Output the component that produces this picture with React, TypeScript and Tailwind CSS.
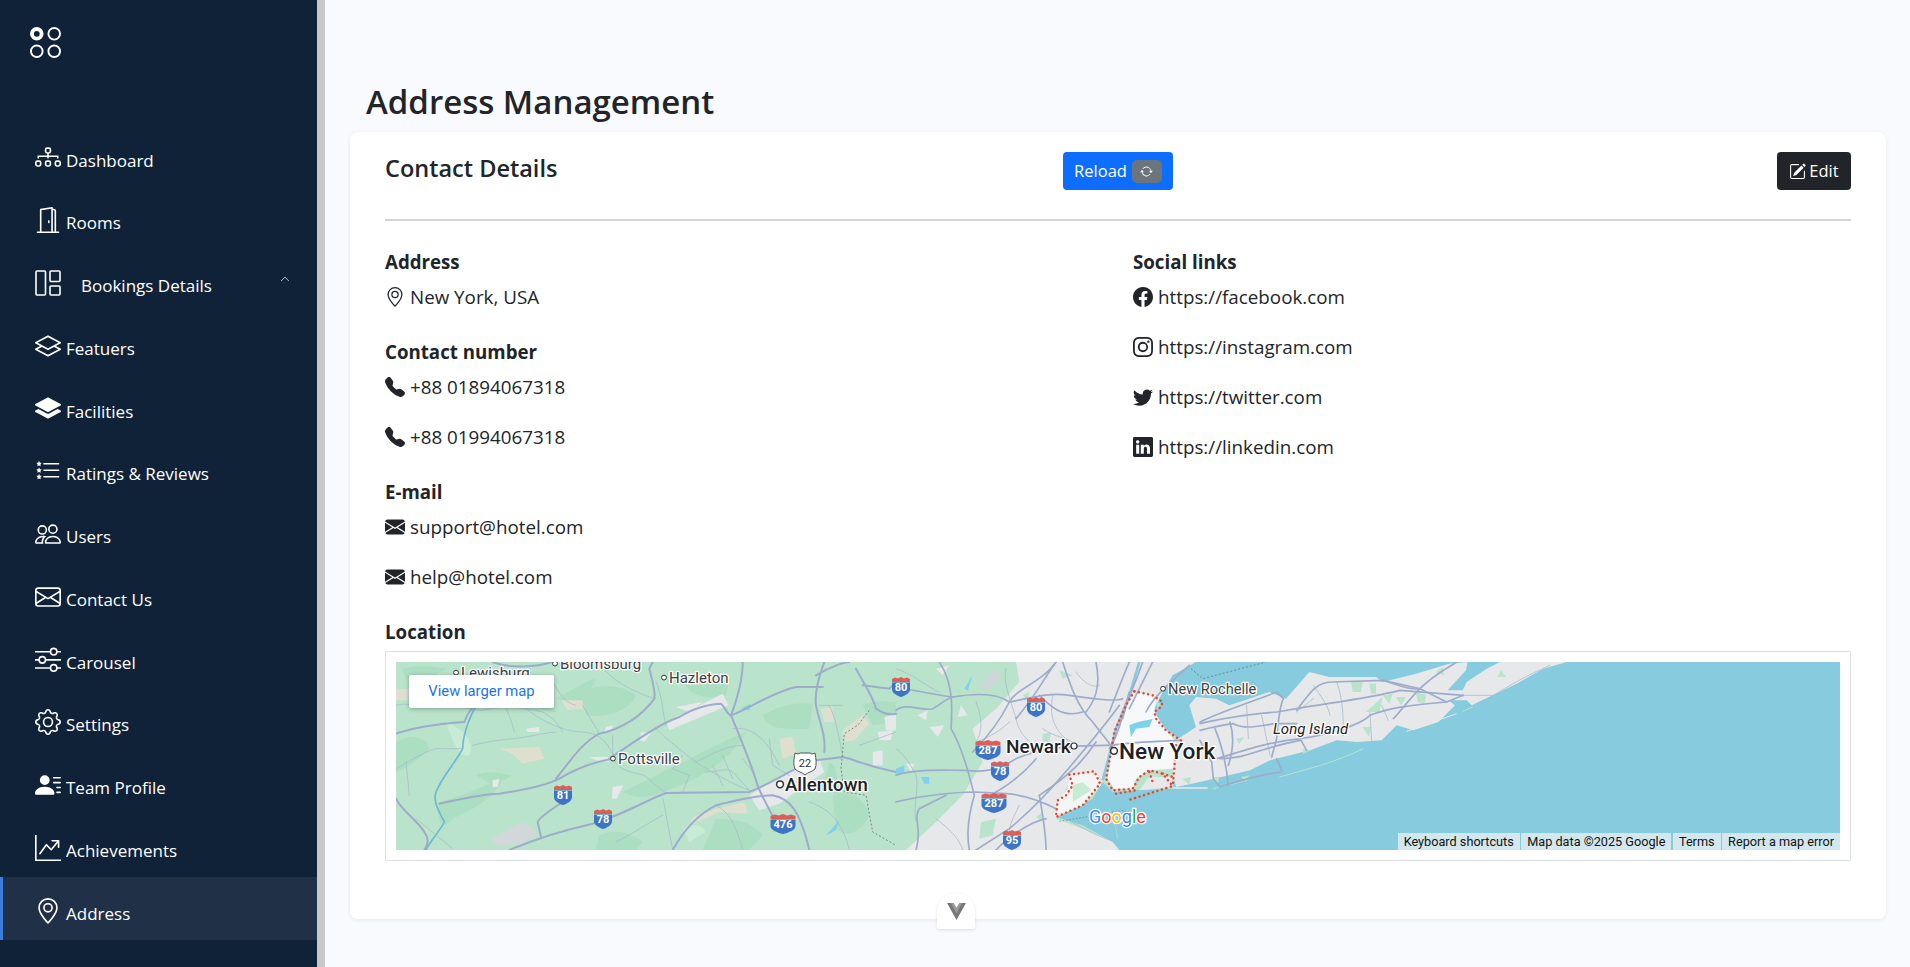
import React from "react";
import {
  BsUiRadiosGrid, BsDiagram3, BsDoorOpen, BsLayers, BsLayersFill, BsListStars, BsPeople,
  BsEnvelope, BsSliders, BsGear, BsPersonLinesFill, BsGraphUpArrow, BsGeoAlt, BsChevronUp, BsArrowRepeat,
  BsPencilSquare, BsTelephoneFill, BsEnvelopeFill, BsFacebook, BsInstagram, BsTwitter, BsLinkedin,
} from "react-icons/bs";

function LayoutIcon({ className }: { className?: string }) {
  return (
    <svg viewBox="0 0 26 26" className={className} fill="none" stroke="currentColor" strokeWidth="1.6">
      <rect x="1" y="1" width="9.5" height="24" rx="1" />
      <rect x="15" y="1" width="10" height="10.5" rx="1" />
      <rect x="15" y="16" width="10" height="9" rx="1" />
    </svg>
  );
}

const nav = [
  { label: "Dashboard", Icon: BsDiagram3 },
  { label: "Rooms", Icon: BsDoorOpen },
  { label: "Bookings Details", Icon: LayoutIcon, sub: true },
  { label: "Featuers", Icon: BsLayers },
  { label: "Facilities", Icon: BsLayersFill },
  { label: "Ratings & Reviews", Icon: BsListStars },
  { label: "Users", Icon: BsPeople },
  { label: "Contact Us", Icon: BsEnvelope },
  { label: "Carousel", Icon: BsSliders },
  { label: "Settings", Icon: BsGear },
  { label: "Team Profile", Icon: BsPersonLinesFill },
  { label: "Achievements", Icon: BsGraphUpArrow },
  { label: "Address", Icon: BsGeoAlt, active: true },
];

function Sidebar() {
  return (
    <aside className="w-[317px] shrink-0 bg-[#0f2238] text-white flex flex-col">
      <div className="h-[124px] pl-[30px] pt-[27px]">
        <BsUiRadiosGrid className="w-[31px] h-[31px]" />
      </div>
      <nav className="flex flex-col">
        {nav.map(({ label, Icon, sub, active }) => (
          <div
            key={label}
            className={
              active
                ? "h-[63px] flex items-center pl-[32px] border-l-[3px] border-[#3b7ddd] bg-[#203147]"
                : "h-[62.75px] flex items-center pl-[35px]"
            }
          >
            <Icon className="w-[26px] h-[26px] shrink-0 translate-y-[2px]" />
            <span className={sub ? "ml-[20px] text-[17px] translate-y-[5px]" : "ml-[5px] text-[17px] translate-y-[5px]"}>{label}</span>
            {sub && <BsChevronUp className="ml-auto mr-[27px] w-[10px] h-[10px] -translate-y-[2px]" />}
          </div>
        ))}
      </nav>
    </aside>
  );
}

function Shield({ x, y, t, w = 18 }: { x: number; y: number; t: string; w?: number }) {
  const h = w / 2;
  return (
    <g transform={`translate(${x},${y})`}>
      <path d={`M${-h} -8 l${w / 6} -1.5 l${w / 6} 1 l${w / 6} -1.5 l${w / 6} 1.5 l${w / 6} -1 l${w / 6} 1.5 v3 h${-w} z`} fill="#dc5f57" />
      <path d={`M${-h} -4.5 h${w} v6.5 c0 4 -${h * 0.5} 6.5 -${h} 8 c-${h * 0.5} -1.5 -${h} -4 -${h} -8 z`} fill="#3d74c4" />
      <text x="0" y="4" fontSize="11" fontWeight="700" fill="#fff" textAnchor="middle" fontFamily="Roboto, sans-serif">{t}</text>
    </g>
  );
}

function Label({ x, y, t, size = 15, weight = 400, dot, italic, fill = "#3c4043" }: { x: number; y: number; t: string; size?: number; weight?: number; dot?: boolean; italic?: boolean; fill?: string }) {
  return (
    <g>
      {dot && <circle cx={x - 5} cy={y - size * 0.36} r={size > 18 ? 3.4 : 2.4} fill="#fff" stroke="#333" strokeWidth={size > 18 ? 1.5 : 1} />}
      <text x={x} y={y} fontSize={size} fontWeight={weight} fontStyle={italic ? "italic" : "normal"} fill={fill} stroke="#fff" strokeWidth="2.5" paintOrder="stroke" strokeLinejoin="round" fontFamily="Roboto, sans-serif">{t}</text>
    </g>
  );
}

const aMajor = [
  "M0 215 C60 195 130 185 205 180 C215 150 235 130 245 125",
  "M130 425 C200 410 260 395 310 395 C380 385 450 370 490 350 C540 320 590 300 650 290",
  "M480 350 C520 300 560 240 610 215 C680 200 740 160 775 110 C780 90 765 40 760 20 L770 0",
  "M640 290 C700 250 780 190 850 165 C900 135 950 125 975 125 C990 140 995 160 1005 160",
  "M1005 160 C1060 140 1130 90 1200 75 L1280 75",
  "M1040 0 C1040 60 1020 120 1005 160 C1030 220 1060 290 1085 370 C1100 410 1130 460 1145 490",
  "M340 564 C420 530 500 505 590 485 C680 460 760 410 810 393 L1060 390 C1110 370 1160 340 1200 320 L1260 295 L1340 285 C1370 290 1400 310 1500 330",
  "M500 420 C470 440 430 465 425 480 L435 525",
  "M830 564 C860 510 900 460 960 430 C1020 415 1090 400 1130 400 C1180 410 1210 440 1240 564",
  "M1285 0 C1270 40 1255 90 1260 130 C1270 180 1290 220 1285 270",
  "M1380 20 C1400 60 1430 100 1440 140 C1460 155 1480 160 1500 155",
  "M1400 70 L1480 80 L1500 60",
  "M1260 40 C1310 10 1350 0 1360 0",
  "M290 0 C340 20 420 15 470 0",
  "M0 410 C20 450 60 470 85 510 C100 530 95 550 85 564",
];

const aThin = [
  "M0 130 C30 120 60 135 120 130 C180 125 220 145 260 145",
  "M380 130 C420 170 500 210 560 210 C620 215 640 250 655 290",
  "M260 145 C320 130 380 135 440 150 C470 165 490 190 500 210",
  "M0 320 C40 300 80 270 120 260 L200 260",
  "M30 300 L40 400 M60 470 L170 560",
  "M230 250 C270 240 300 235 350 230 C400 225 430 215 480 210",
  "M330 140 C345 170 350 190 355 210",
  "M650 220 C650 260 650 280 655 290 C660 320 700 330 745 340 C770 360 790 380 810 393",
  "M700 250 L780 200 C810 230 860 270 900 300 C960 340 1020 370 1060 385",
  "M800 410 C810 440 810 470 820 510 L830 564",
  "M1010 200 C1080 190 1120 250 1150 310",
  "M900 300 C940 280 990 250 1040 250",
  "M930 330 C970 330 1000 310 1020 340 L1060 385",
  "M980 280 L1010 350 M950 310 L980 370 M1040 290 L1070 330",
  "M1120 230 L1130 310 L1180 340",
  "M1300 130 C1320 170 1330 230 1340 285",
  "M1390 250 L1500 210 M1270 130 L1340 130",
  "M610 0 C640 50 690 80 775 110",
  "M780 60 C800 100 800 160 810 190",
  "M660 540 C720 510 760 480 800 460",
  "M960 430 C1000 450 1020 490 1040 564",
  "M1240 420 C1300 440 1340 480 1360 564",
  "M470 60 C490 90 500 120 540 130 M560 130 L610 215",
  "M860 280 L830 320 L880 340 L860 390",
];

const bMajor = [
  "M0 75 C60 85 120 100 170 105 C230 95 300 90 340 120 C400 110 450 90 520 100 C590 110 660 120 680 110",
  "M130 0 C170 60 170 130 165 200 C200 260 220 340 235 400 C220 450 210 510 220 564",
  "M0 340 C50 320 150 325 210 325 C250 330 300 330 360 290 C430 260 500 250 640 250",
  "M0 420 C80 400 180 390 235 390 L330 395 C400 400 460 430 480 440",
  "M0 145 C30 120 80 150 110 140 C130 130 150 110 170 105",
  "M360 170 C420 100 450 40 480 0",
  "M500 0 C520 60 540 130 590 180 C620 220 640 240 650 260",
  "M600 0 C610 50 610 100 570 150",
  "M670 130 C620 200 560 270 500 340 C450 400 400 450 340 500 L240 564",
  "M430 400 C440 460 450 510 450 564",
  "M700 90 C680 180 650 250 640 260",
  "M740 0 C720 60 690 120 680 170",
  "M770 0 C740 60 720 100 700 140",
  "M880 10 C840 50 780 90 750 150",
  "M850 235 C760 240 700 240 650 250",
  "M60 564 C80 500 50 470 70 440 L150 400",
  "M480 0 C440 60 360 80 340 120 C310 180 280 220 230 270",
  "M420 290 C380 340 320 380 290 395",
  "M600 240 C560 300 520 340 430 400",
  "M560 150 C500 170 460 130 430 100",
  "M300 564 C330 530 400 480 450 470",
  "M700 0 C670 70 660 100 640 150",
];

const bThin = [
  "M0 20 C60 40 100 80 130 90",
  "M0 260 C30 280 50 320 60 340 C70 380 50 430 60 480",
  "M240 240 C270 230 310 210 340 180",
  "M360 170 C370 220 400 240 430 260",
  "M470 100 C460 160 470 200 520 240",
  "M240 120 C260 170 260 210 240 240",
  "M330 20 C320 60 340 100 360 170",
  "M120 470 C160 500 190 530 200 564",
  "M540 30 C560 60 590 80 610 70",
  "M510 470 C560 500 620 530 660 540",
  "M370 430 C350 470 340 490 340 510",
  "M440 200 C480 230 510 220 540 250",
];

const cMajor = [
  "M0 180 C60 150 140 125 230 90 L250 110 C240 130 235 170 230 230 L215 285",
  "M0 185 C60 170 120 160 230 150 L290 140 C370 125 500 110 600 85 L790 100",
  "M100 185 C140 205 180 190 225 185 L290 185",
  "M50 290 C120 270 200 240 300 230 C380 220 480 190 510 160 C560 140 620 130 740 120 L790 100",
  "M290 145 C330 90 350 60 395 60 L550 55 L660 80 L740 120",
  "M660 80 C620 120 600 150 580 170",
  "M550 55 C590 70 640 85 660 80 C700 40 740 20 770 0",
  "M45 200 C70 260 80 320 85 370",
  "M90 180 C105 230 95 280 85 310",
  "M0 235 L35 300 L40 350 L60 375",
  "M245 330 C200 335 120 355 60 375",
  "M230 290 L245 325",
  "M0 205 C40 195 60 190 100 185",
  "M60 290 C140 290 170 260 300 235",
  "M300 230 L320 265",
];

const cThin = [
  "M410 60 C430 110 430 170 430 220",
  "M510 150 L515 240",
  "M790 100 L880 100 C930 70 980 40 1050 10",
  "M140 130 L145 230 M185 160 L210 280",
  "M340 70 C360 100 385 130 390 160",
  "M340 110 L290 150",
  "M545 130 L565 175",
];

function MapArt() {
  return (
    <svg viewBox="0 0 1444 188" preserveAspectRatio="none" className="block w-full h-full">
      <rect width="1444" height="188" fill="#b9e3cb" />
      {/* crop A: western farmland */}
      <g transform="scale(0.33333)">
        <g fill="#acdec2">
          <path d="M0 240 C50 210 90 230 100 260 C60 300 30 320 0 330z" />
          <path d="M130 420 C200 400 270 370 320 350 C300 400 240 440 170 470 C150 500 120 500 130 420z" />
          <path d="M380 80 C430 100 460 120 480 150 L400 140z" />
          <path d="M560 90 C620 60 680 70 720 100 C700 150 620 170 570 160z" />
          <path d="M680 390 C760 350 820 320 880 290 C940 260 1000 230 1050 210 C1010 290 900 360 800 390 C760 410 720 410 680 390z" />
          <path d="M870 70 C930 60 970 70 1000 50 L990 100 C940 110 890 110 870 70z" />
          <path d="M1100 160 C1150 130 1200 120 1250 125 L1240 200 C1180 200 1120 210 1100 160z" />
          <path d="M1310 400 C1360 380 1410 410 1420 460 C1400 510 1350 530 1320 500z" />
          <path d="M960 470 C1020 470 1070 480 1100 520 L1060 564 H920z" />
          <path d="M610 520 C660 500 700 510 740 540 L720 564 H600z" />
          <path d="M480 110 C520 90 560 60 600 50 L560 130z" />
          <path d="M240 340 C280 320 330 340 350 340 L290 370z" />
          <path d="M20 20 C60 10 100 10 150 20 L100 50 L30 50z" />
          <path d="M1400 130 C1450 110 1480 120 1500 120 V180 L1430 190z" />
          <path d="M1300 300 C1330 320 1320 360 1330 400 L1280 380z" />
        </g>
        <g fill="#c8ebd6">
          <path d="M150 180 C200 200 240 240 220 280 C190 290 170 240 150 180z" />
          <path d="M860 500 C890 480 920 490 930 510 L880 540z" />
        </g>
        <g fill="#dfdfd0">
          <path d="M310 260 L430 255 L445 290 L380 305 L350 275z" />
          <path d="M495 115 L560 115 L560 140 L515 145z" />
          <path d="M890 465 L960 440 L1045 420 L1055 455 L970 450 L880 490z" />
          <path d="M0 80 L40 80 L35 115 L0 115z" />
          <path d="M1150 230 L1190 225 L1200 275 L1160 290z" />
          <path d="M1275 140 L1310 135 L1315 180 L1285 180z" />
          <path d="M1340 205 L1400 160 L1420 185 L1375 235 L1345 240z" />
        </g>
        <g fill="#e6e8ea">
          <path d="M810 180 L980 95 L998 130 L820 205z" />
          <path d="M735 210 L765 213 L745 240 L732 235z" />
          <path d="M840 135 L920 120 L880 150z" />
          <path d="M650 375 L682 370 L662 410 L648 410z" />
          <path d="M1060 400 L1190 320 L1270 290 L1285 330 L1150 425 L1090 445z" />
          <path d="M1445 210 L1490 205 L1485 235 L1450 235z" />
          <path d="M1465 165 L1500 155 L1500 205 L1470 205z" />
          <path d="M580 285 L645 285 L640 300 L600 295z" />
          <path d="M390 200 L430 195 L430 210 L395 210z" />
          <path d="M630 195 L650 190 L645 210 L625 210z" />
          <path d="M290 355 L310 350 L305 375 L290 375z" />
          <path d="M1430 270 L1460 265 L1460 310 L1430 310z" />
        </g>
        <path d="M285 530 L380 480 L425 510 L380 545 L300 550z" fill="#d2d8d9" />
        <path d="M1035 140 L1065 125 L1060 145z" fill="#7fd2ec" />
        <path d="M1290 520 L1330 475 L1320 505z" fill="#7fd2ec" />
        <path d="M245 125 C215 170 200 230 200 260 C180 300 140 340 120 390 C110 420 130 450 145 480 C130 510 100 540 90 564" fill="none" stroke="#6db9d2" strokeWidth="5" />
        <g fill="none" stroke="#a9bccb" strokeWidth="2.4" strokeLinecap="round">
          {aThin.map((d) => <path key={d} d={d} />)}
        </g>
        <g fill="none" stroke="#9eaccb" strokeWidth="6" strokeLinecap="round">
          {aMajor.map((d) => <path key={d} d={d} />)}
        </g>
        <path d="M1420 145 L1385 190 L1345 215 L1335 320 L1345 390 L1410 400 L1430 510 L1500 550" fill="none" stroke="#6f7a78" strokeWidth="2.5" strokeDasharray="6 6" />
      </g>

      {/* crop B: New York area */}
      <g transform="translate(500,0) scale(0.33333)">
        <path d="M360 0 L370 60 L300 140 L230 200 L260 300 L200 400 L120 480 L30 564 H670 L660 540 L560 500 L480 470 L500 400 L530 340 L620 360 L650 270 L690 120 L720 0z" fill="#e6e8ea" />
        <path d="M720 0 H900 L790 130 L700 200 L680 0z" fill="#e6e8ea" />
        <g fill="#b9e3cb">
          <path d="M490 25 L530 40 L500 50z" /><path d="M440 215 L465 210 L460 240 L440 240z" />
          <path d="M255 480 L300 470 L290 520 L250 530z" /><path d="M420 465 L440 450 L435 475z" />
          <path d="M380 100 L400 90 L395 115z" />
        </g>
        <g fill="#e6e8ea">
          <path d="M100 195 L145 190 L125 225z" /><path d="M195 130 L215 160 L185 165z" /><path d="M65 160 L95 145 L90 175z" />
          <path d="M120 20 L160 10 L140 40z" /><path d="M30 305 L55 305 L45 330z" />
          <path d="M290 170 L320 160 L310 190z" />
        </g>
        <path d="M250 75 L300 18 L315 45 L275 85z" fill="#d0d6d8" />
        <path d="M205 80 L228 42 L216 86z" fill="#7fd2ec" />
        <path d="M0 320 L25 310 L25 335 L0 335z" fill="#7fd2ec" />
        <path d="M75 345 L100 345 L100 365 L85 365z" fill="#7fd2ec" />
        {/* water */}
        <path d="M900 0 L830 40 L800 90 L775 140 L790 185 L850 230 L840 330 L830 380 L720 385 L650 390 L620 360 L590 410 L480 465 L560 490 L650 540 L670 564 H2900 V0z" fill="#86cbde" />
        <path d="M730 0 L700 100 L660 200 L640 280 L620 355" fill="none" stroke="#86cbde" strokeWidth="8" />
        <path d="M640 440 L660 500 L665 530" fill="none" stroke="#b9e3cb" strokeWidth="2" />
        {/* Long Island */}
        <path d="M840 235 L900 195 L880 130 L900 105 L960 110 L1000 130 L1120 90 L1170 110 L1240 30 L1300 45 L1440 45 L1460 60 L1560 35 L1660 5 L1715 0 L1710 25 L1655 85 L1700 85 L1712 60 L1772 20 L1812 0 L2012 0 L1942 20 L1862 65 L1727 130 L1712 115 L1657 115 L1677 130 L1627 180 L1552 205 L1502 190 L1457 235 L1382 240 L1322 235 L1242 265 L1122 295 L1062 325 L912 360 L840 375 L830 330z" fill="#e6e8ea" />
        <g fill="#b9e3cb">
          <path d="M1365 60 L1400 60 L1395 90 L1370 90z" /><path d="M1420 65 L1440 65 L1440 95 L1425 95z" />
          <path d="M1410 150 L1460 105 L1450 150z" /><path d="M1460 100 L1490 95 L1480 125z" />
          <path d="M1500 105 L1530 105 L1515 130z" /><path d="M1560 90 L1590 100 L1585 125 L1565 120z" />
          <path d="M1815 25 L1830 45 L1805 45z" /><path d="M1220 260 L1245 265 L1220 275z" />
          <path d="M1400 195 L1425 195 L1420 225z" /><path d="M1020 230 L1045 225 L1030 245z" />
          <path d="M860 350 L885 345 L880 370z" /><path d="M1035 345 L1060 340 L1050 360z" />
          <path d="M950 345 L970 345 L965 370z" />
          <path d="M1620 30 L1640 15 L1645 40z" />
        </g>
        <path d="M1402 260 C1320 300 1240 320 1150 345" fill="none" stroke="#b9e3cb" strokeWidth="3" />
        <path d="M950 380 C990 370 1020 365 1050 355" fill="none" stroke="#b9e3cb" strokeWidth="3" />
        <path d="M1532 208 L1682 155" fill="none" stroke="#e6e8ea" strokeWidth="3" />
        <path d="M1700 148 L1730 135" fill="none" stroke="#b9e3cb" strokeWidth="3" />
        <path d="M830 378 L935 378" fill="none" stroke="#e6e8ea" strokeWidth="4" />
        {/* NYC */}
        <path d="M690 130 L650 250 L635 350 L655 380 L710 380 L720 350 L760 325 L830 320 L840 240 L800 190 L775 150 L780 100 L715 90z" fill="#f7f8fa" />
        <path d="M700 190 C730 175 760 175 770 170 L760 195 L720 200 L705 225z" fill="#7fd2ec" />
        <path d="M520 340 L600 330 L615 370 L560 430 L480 465 L490 410 L515 380z" fill="#f3f6f3" />
        <path d="M530 370 L560 360 L585 385 L530 420z" fill="#c8ebd6" />
        <path d="M780 120 L795 125 L785 140z" fill="#b9e3cb" />
        <path d="M760 345 L830 345 L825 375 L730 385z" fill="#e6e8ea" />
        <g fill="none" stroke="#a9bccb" strokeWidth="2.4" strokeLinecap="round">
          {bThin.map((d) => <path key={d} d={d} />)}
        </g>
        <g fill="none" stroke="#9eaccb" strokeWidth="5" strokeLinecap="round">
          {bMajor.map((d) => <path key={d} d={d} />)}
        </g>
        <path d="M885 20 L920 50 L1110 0" fill="none" stroke="#6f7a78" strokeWidth="2.5" strokeDasharray="6 6" />
        <path d="M490 478 L600 460 L680 445 L700 455" fill="none" stroke="#6f7a78" strokeWidth="2" strokeDasharray="5 5" />
        <g fill="none" stroke="#ea4335" strokeWidth="7.5" strokeDasharray="0.1 14" strokeLinecap="round">
          <path d="M715 88 L770 100 L800 120 L795 135 L775 150 L780 170 L810 205 L855 235" />
          <path d="M715 88 L690 130 L655 210 L645 270 L630 350 L650 385 L710 380 L730 345 L760 325 L800 335 L830 372 L695 415" />
          <path d="M840 250 L835 320 L830 375" />
          <path d="M660 395 L720 385" />
          <path d="M760 330 L770 360 M800 335 L830 345" />
          <path d="M520 338 L595 328 L612 365 L560 430 L480 465 L485 415 L510 400 L530 370z" />
        </g>
      </g>

      {/* crop C: Long Island roads */}
      <g transform="translate(804,0) scale(0.33333)">
        <g fill="none" stroke="#a9bccb" strokeWidth="2.4" strokeLinecap="round">
          {cThin.map((d) => <path key={d} d={d} />)}
        </g>
        <g fill="none" stroke="#9eaccb" strokeWidth="5" strokeLinecap="round">
          {cMajor.map((d) => <path key={d} d={d} />)}
        </g>
      </g>

      {/* shields */}
      <Shield x={505} y={25} t="80" />
      <Shield x={167} y={133} t="81" />
      <Shield x={207} y={157} t="78" />
      <Shield x={387} y={162} t="476" w={25} />
      <Shield x={592} y={88} t="287" w={25} />
      <Shield x={604} y={109} t="78" />
      <Shield x={598} y={141} t="287" w={25} />
      <Shield x={616} y={178} t="95" />
      <Shield x={640} y={45} t="80" />
      <g transform="translate(409,101)">
        <path d="M-10 -10l3 1 2-1 5 0 5 0 2 1 3-1c1 6 2 11 0 16c-3 3-7 3-10 6c-3-3-7-3-10-6c-2-5-1-10 0-16z" fill="#fff" stroke="#555" strokeWidth="1" />
        <text x="0" y="4" fontSize="11" fill="#333" textAnchor="middle" fontFamily="Roboto, sans-serif">22</text>
      </g>
      {/* labels */}
      <Label x={65} y={16} t="Lewisburg" dot />
      <Label x={164} y={7} t="Bloomsburg" dot />
      <Label x={273} y={21} t="Hazleton" dot />
      <Label x={222} y={102} t="Pottsville" dot />
      <Label x={389} y={129} t="Allentown" size={18.6} weight={500} dot fill="#202124" />
      <Label x={610} y={91} t="Newark" size={19} weight={500} fill="#202124" />
      <circle cx={678} cy={84} r="3" fill="#fff" stroke="#333" strokeWidth="1.2" />
      <Label x={723} y={97} t="New York" size={22.6} weight={500} dot fill="#202124" />
      <Label x={772} y={32} t="New Rochelle" size={14.6} dot />
      <Label x={877} y={72} t="Long Island" size={15} italic fill="#202124" />
      <text x="693" y="161" fontSize="18" fontFamily="Roboto, sans-serif" stroke="#fff" strokeWidth="2.5" paintOrder="stroke">
        <tspan fill="#4285f4">G</tspan><tspan fill="#ea4335">o</tspan><tspan fill="#fbbc05">o</tspan><tspan fill="#4285f4">g</tspan><tspan fill="#34a853">l</tspan><tspan fill="#ea4335">e</tspan>
      </text>
    </svg>
  );
}

function MapBlock() {
  return (
    <div className="border border-[#dee2e6] p-[10px] h-[210px]">
      <div className="relative h-[188px] overflow-hidden">
        <MapArt />
        <div className="absolute left-[13px] top-[13px] w-[145px] h-[33px] bg-white rounded-[2px] shadow-[0_1px_4px_rgba(0,0,0,0.3)] flex items-center justify-center text-[14.8px] text-[#1a73e8] font-['Roboto',sans-serif]">
          View larger map
        </div>
        <div className="absolute right-0 bottom-0 h-[17px] flex gap-[1.5px] text-[12.7px] leading-[17px] text-[#111] font-['Roboto',sans-serif]">
          <span className="px-[6px] bg-[#d3e8ee]">Keyboard shortcuts</span>
          <span className="px-[6px] bg-[#d3e8ee]">Map data ©2025 Google</span>
          <span className="px-[6px] bg-[#d3e8ee]">Terms</span>
          <span className="px-[6px] bg-[#d3e8ee]">Report a map error</span>
        </div>
      </div>
    </div>
  );
}

function Item({ Icon, text, gap = 5, size = 20 }: { Icon: React.ComponentType<{ className?: string; style?: React.CSSProperties }>; text: string; gap?: number; size?: number }) {
  return (
    <div className="h-[24px] mb-[26px] flex items-center text-[18.8px] text-[#212529]">
      <Icon style={{ width: size, height: size, marginRight: gap }} className="shrink-0" />
      <span>{text}</span>
    </div>
  );
}

function Heading({ children, top = false }: { children: React.ReactNode; top?: boolean }) {
  return <div className={top ? "h-[24px] mb-[11px] flex items-center text-[18.7px] font-bold text-[#212529]" : "h-[24px] mt-[5px] mb-[11px] flex items-center text-[18.7px] font-bold text-[#212529]"}>{children}</div>;
}

export default function App() {
  return (
    <div className="flex h-[967px] overflow-hidden bg-[#f9fafe] font-['Open_Sans',sans-serif]">
      <Sidebar />
      <div className="w-[8px] bg-[#c8c8c8] shrink-0" />
      <main className="flex-1 relative pl-[25px] pr-[24px]">
        <h1 className="h-[132px] pl-[16px] pt-[80px] text-[33px] leading-[44px] font-semibold text-[#212529]">Address Management</h1>
        <section className="h-[787px] bg-white rounded-[8px] shadow-[0_1px_4px_rgba(0,0,0,0.08)] px-[35px] pt-[20px]">
          <div className="h-[69px] flex items-start justify-between border-b-2 border-[#d4d4d4]">
            <h2 className="w-[678px] text-[23.5px] leading-[32px] font-semibold text-[#212529]">Contact Details</h2>
            <button className="h-[38px] w-[110px] rounded-[4px] bg-[#0d6efd] text-white text-[16.5px] flex items-center justify-center gap-[5px]">
              Reload
              <span className="w-[30px] h-[23px] rounded-[5px] bg-[#6c757d] flex items-center justify-center"><BsArrowRepeat className="w-[13px] h-[13px]" /></span>
            </button>
            <div className="flex-1" />
            <button className="h-[38px] w-[74px] rounded-[4px] bg-[#212529] text-white text-[16.5px] flex items-center justify-center gap-[3px]">
              <BsPencilSquare className="w-[17px] h-[17px]" /> Edit
            </button>
          </div>
          <div className="grid grid-cols-[748px_1fr] pt-[29px] h-[430px]">
            <div className="flex flex-col">
              <Heading top>Address</Heading>
              <Item Icon={BsGeoAlt} text="New York, USA" />
              <Heading>Contact number</Heading>
              <Item Icon={BsTelephoneFill} text="+88 01894067318" />
              <Item Icon={BsTelephoneFill} text="+88 01994067318" />
              <Heading>E-mail</Heading>
              <Item Icon={BsEnvelopeFill} text="support@hotel.com" />
              <Item Icon={BsEnvelopeFill} text="help@hotel.com" />
              <Heading>Location</Heading>
            </div>
            <div className="flex flex-col">
              <Heading top>Social links</Heading>
              <Item Icon={BsFacebook} text="https://facebook.com" />
              <Item Icon={BsInstagram} text="https://instagram.com" />
              <Item Icon={BsTwitter} text="https://twitter.com" />
              <Item Icon={BsLinkedin} text="https://linkedin.com" />
            </div>
          </div>
          <MapBlock />
        </section>
        <div className="absolute left-[612px] bottom-[38px] w-[38px] h-[36px] bg-white rounded-t-[18px] rounded-b-[3px] shadow-[0_1px_3px_rgba(0,0,0,0.12)] flex items-center justify-center">
          <svg viewBox="0 0 20 18" className="w-[19px] h-[17px]"><path d="M0 0h6l4 7 4-7h6L10 18z" fill="#777" /><path d="M4 0h3l3 5 3-5h3L10 11z" fill="#999" /></svg>
        </div>
      </main>
    </div>
  );
}
